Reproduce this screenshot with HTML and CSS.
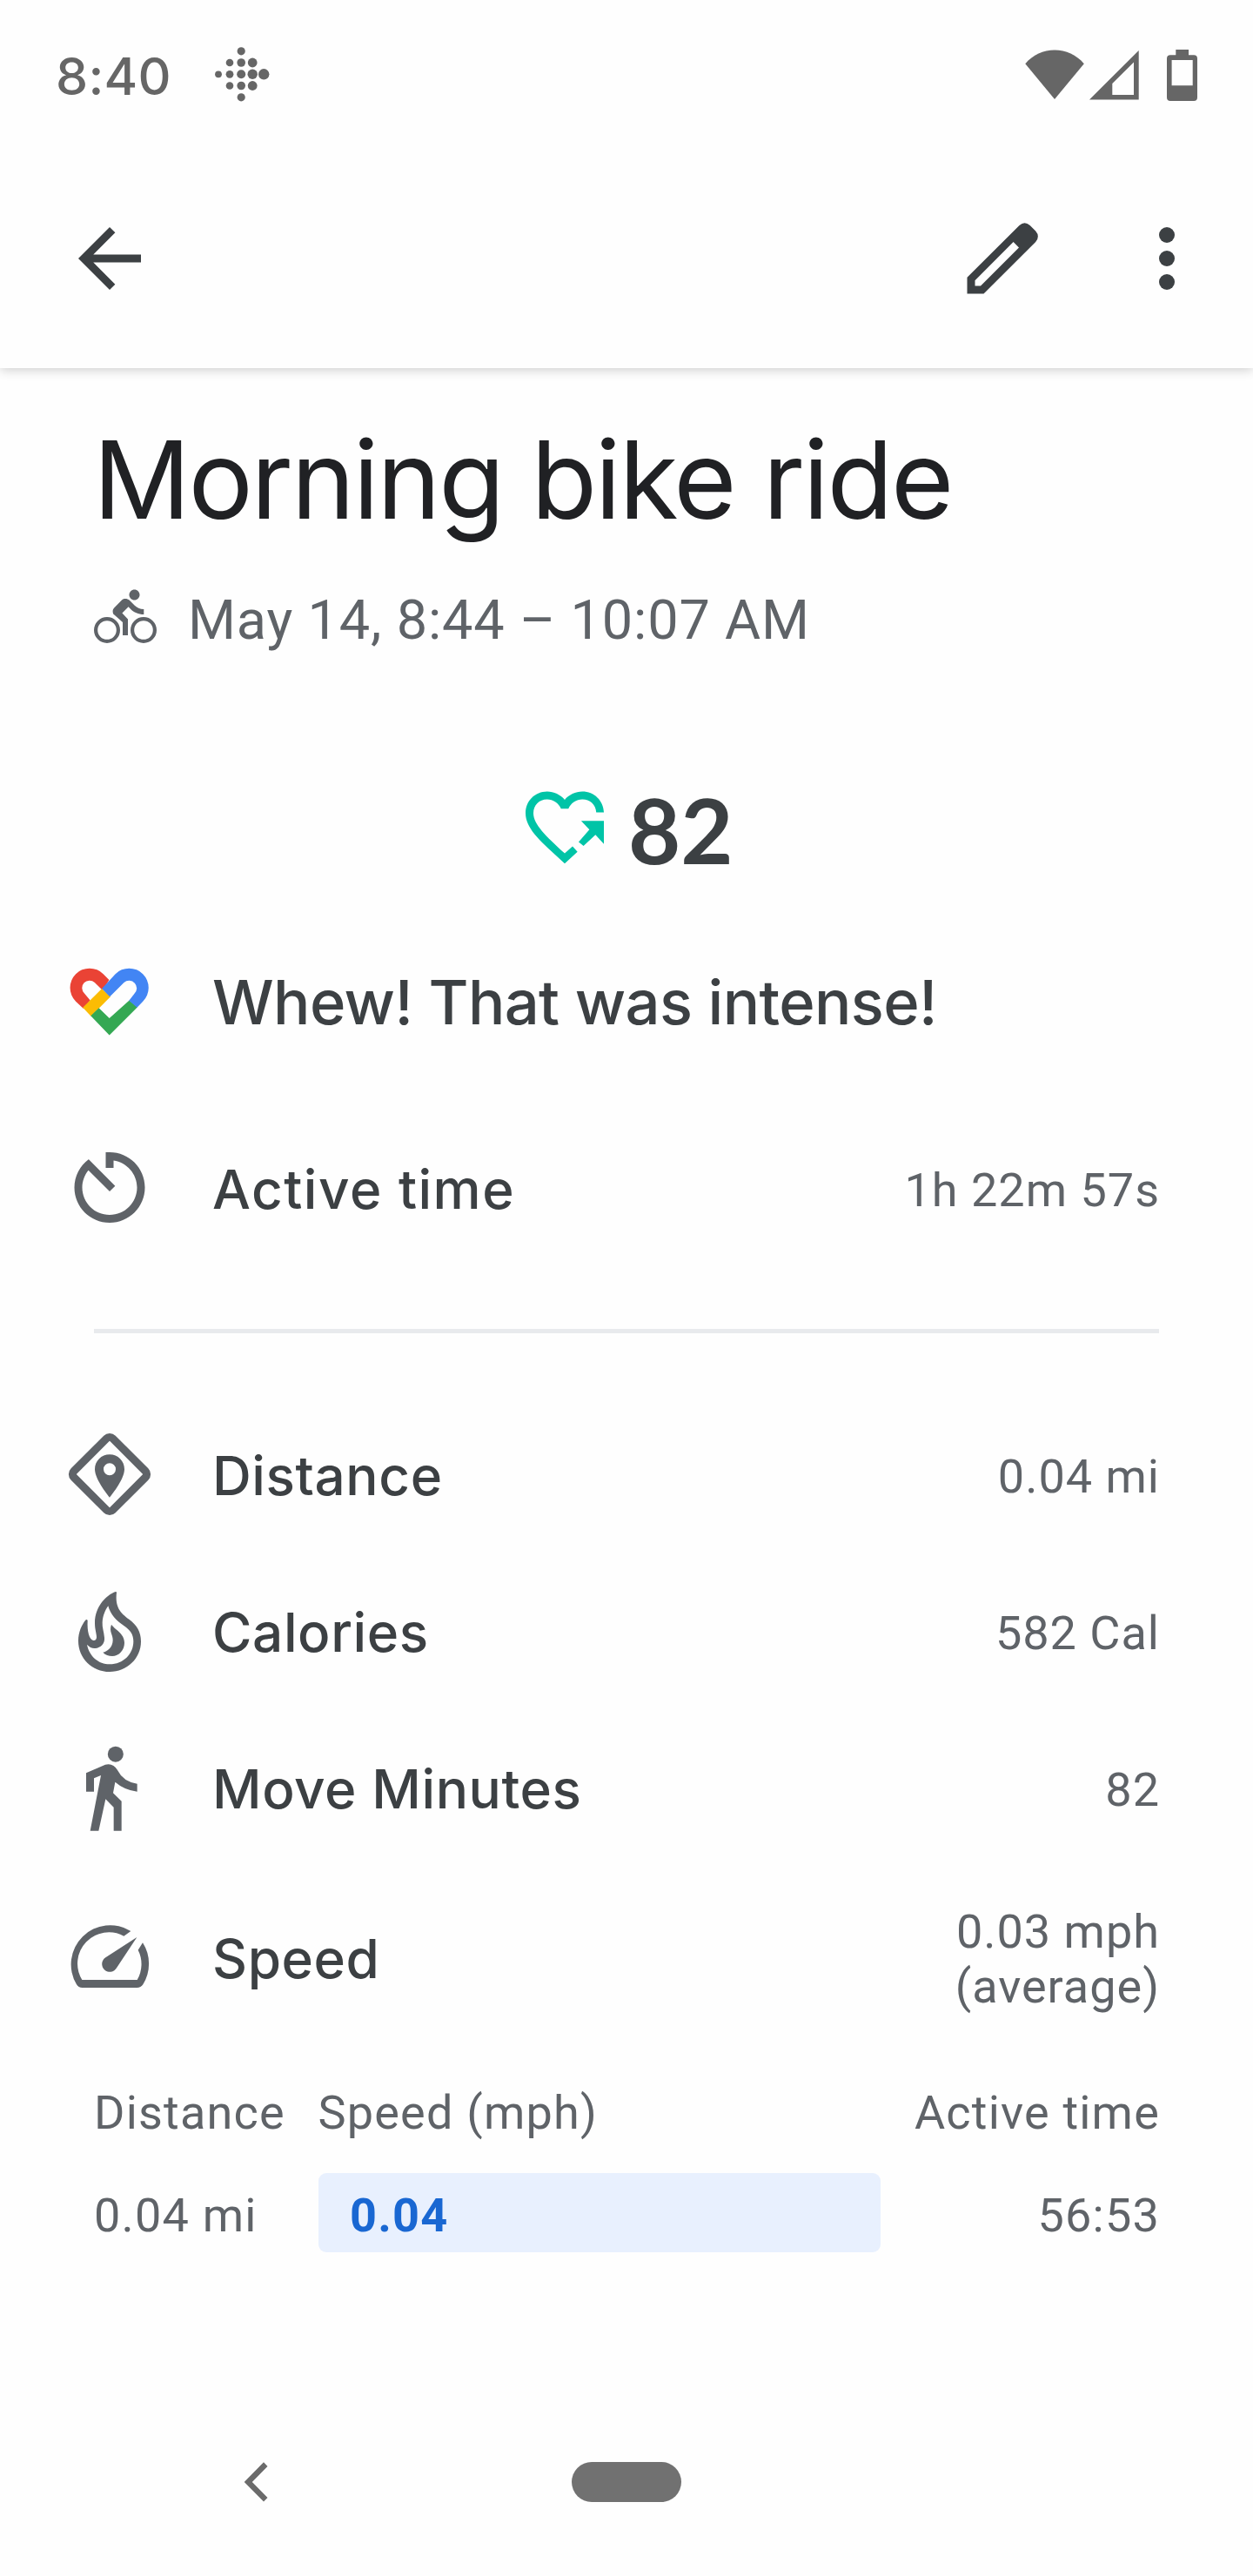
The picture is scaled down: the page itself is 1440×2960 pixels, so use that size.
FILE: index.html
```html
<!DOCTYPE html>
<html lang="en">
<head>
<meta charset="utf-8">
<title>Morning bike ride</title>
<link rel="stylesheet" href="styles.css">
</head>
<body>
<div class="screen">
  <header class="header">
    <div class="status">
      <span class="clock">8:40</span>
      <svg class="dots" viewBox="247 54 64 64">
        <circle cx="251" cy="85.3" r="3.9"/>
        <circle cx="264" cy="72" r="4.3"/><circle cx="264" cy="85.3" r="4.4"/><circle cx="264" cy="98.5" r="4.3"/>
        <circle cx="277.2" cy="58.8" r="4.6"/><circle cx="277.2" cy="72" r="4.8"/><circle cx="277.2" cy="85.3" r="5"/><circle cx="277.2" cy="98.5" r="4.8"/><circle cx="277.2" cy="111.8" r="4.6"/>
        <circle cx="290.2" cy="72" r="5.4"/><circle cx="290.2" cy="85.3" r="5.7"/><circle cx="290.2" cy="98.5" r="5.4"/>
        <circle cx="303.2" cy="85.3" r="6.2"/>
      </svg>
      <svg class="system" viewBox="1176 50 202 70">
        <path d="M1178.3 72.3C1187 62 1199 56.6 1212 56.6S1237 62 1245.8 72.3L1212 113Z"/>
        <path fill-rule="evenodd" d="M1252 113.5L1308.7 57V113.5ZM1278.3 108H1303V70.5L1278.3 95Z"/>
        <path fill-rule="evenodd" d="M1351.3 62.3V56H1366V62.3H1372Q1376 62.3 1376 66.3V111Q1376 115 1372 115H1345Q1341 115 1341 111V66.3Q1341 62.3 1345 62.3ZM1346.6 68V97.2H1370.7V68Z"/>
      </svg>
    </div>
    <nav class="toolbar">
      <svg class="icon back" viewBox="0 0 24 24"><path d="M20 11H7.83l5.59-5.59L12 4l-8 8 8 8 1.41-1.41L7.83 13H20z"/></svg>
      <svg class="icon edit" viewBox="1098 243 108 108"><path fill-rule="evenodd" d="M1111.5 337.5V318.7L1171.5 259Q1177.5 253.6 1183.7 259L1190.2 265.5Q1195.5 271.5 1190.2 278L1130.5 337.5ZM1120.5 328.6H1127L1171 284.5L1164.6 278L1120.5 322.3Z"/></svg>
      <svg class="icon" viewBox="0 0 24 24"><circle cx="12" cy="6" r="2"/><circle cx="12" cy="12" r="2"/><circle cx="12" cy="18" r="2"/></svg>
    </nav>
  </header>

  <main>
    <h1 class="title">Morning bike ride</h1>
    <div class="when">
      <svg class="bike" viewBox="0 0 24 24">
        <path d="M15.5 5.5c1.1 0 2-.9 2-2s-.9-2-2-2-2 .9-2 2 .9 2 2 2zM10.8 10.5l2.4-2.4.8.8c1.3 1.3 3 2.1 5.1 2.1V9c-1.5 0-2.7-.6-3.6-1.5l-1.9-1.9c-.5-.4-1-.6-1.6-.6s-1.1.2-1.4.6L7.8 8.4c-.4.4-.6.9-.6 1.4 0 .6.2 1.1.6 1.4L11 14v5h2v-6.2z"/>
        <g fill="none" stroke="#5f6368" stroke-width="1.4"><circle cx="5" cy="17" r="4.3"/><circle cx="19" cy="17" r="4.3"/></g>
      </svg>
      <span>May 14, 8:44 – 10:07 AM</span>
    </div>

    <div class="score">
      <svg class="heart" viewBox="2 0 20 24"><path d="M22 8.33C21.9 5.3 19.5 3 16.5 3c-1.74 0-3.41.81-4.5 2.09C10.91 3.81 9.24 3 7.5 3 4.42 3 2 5.42 2 8.5c0 3.78 3.4 6.86 8.55 11.54L12 21.4 15.26 18.4 14 17 12 18.8C7.2 14.4 4 11.4 4 8.5 4 6.5 5.5 5 7.5 5c1.5 0 3 1 3.55 2.4h1.9C13.5 6 15 5 16.5 5c1.9 0 3.45 1.3 3.55 3.33zM16.2 10.5H22V16.4L19.85 14.07 16.8 16.9 15.55 15.9 18.3 12.7z"/></svg>
      <span>82</span>
    </div>

    <div class="row">
      <svg class="icon" viewBox="72 1097 108 108">
        <path fill="#ea4335" d="M125.4 1126L118.7 1119.2A22.3 22.3 0 0 0 87.1 1150.8L95.7 1158.7L103.7 1149.5L97 1141.5A8.3 8.3 0 0 1 108.8 1129L118 1138Z"/>
        <path fill="#fbbc04" d="M117.1 1136L127 1145.3L104.6 1167.7L95.2 1157.7Z"/>
        <path fill="#34a853" d="M104.3 1167.3L113.6 1158.3L125.7 1170L148.6 1149.6L158 1157.3L125.7 1189.5Z"/>
        <path fill="#4285f4" d="M117.1 1136L132.6 1119.2A22.3 22.3 0 0 1 164.2 1150.8L157.5 1157.8L148.3 1149.8L154.3 1142A8.3 8.3 0 0 0 142.5 1129.1L126.2 1145.3Z"/>
      </svg>
      <span class="label message">Whew! That was intense!</span>
    </div>

    <div class="row active">
      <svg class="icon" viewBox="0 .33 24 24"><path d="M11 3v4h2V5.08c3.39.49 6 3.39 6 6.92 0 3.87-3.13 7-7 7s-7-3.13-7-7c0-1.68.59-3.22 1.58-4.42L12 13l1.41-1.41-6.8-6.8v.02C4.42 6.45 3 9.05 3 12c0 4.97 4.02 9 9 9 4.97 0 9-4.03 9-9s-4.03-9-9-9h-1z"/></svg>
      <span class="label wide">Active time</span>
      <span class="value">1h 22m 57s</span>
    </div>

    <hr class="divider">

    <div class="row">
      <svg class="icon" viewBox="72 1641 108 108">
        <rect x="94.4" y="1662.4" width="63.2" height="63.2" rx="5" fill="none" stroke="#5f6368" stroke-width="9" transform="rotate(45 126 1694)"/>
        <path fill-rule="evenodd" d="M126 1671.3C116.5 1671.3 109 1678.8 109 1688.3C109 1700.5 126 1720.7 126 1720.7S143 1700.5 143 1688.3C143 1678.8 135.5 1671.3 126 1671.3ZM126 1681.3A7 7 0 1 1 126 1695.3A7 7 0 1 1 126 1681.3Z"/>
      </svg>
      <span class="label">Distance</span>
      <span class="value">0.04 mi</span>
    </div>
    <div class="row">
      <svg class="icon" viewBox="36 603 324 324">
        <path fill-rule="evenodd" d="M222 629Q221 626 216 628C190 638 147 675 147 735C147 758 153 770 153 784C153 792 148 796 142 795C128 792 120 765 122 726Q119 720 114 726C102 742 90 765 90 797C90 855 137 903 198 903C258 903 306 857 306 798C306 765 292 742 265 722C235 700 216 680 222 629ZM193 676C200 705 222 728 247 744C270 760 280 775 280 798C280 842 245 877 198 877C160 877 128 850 120 809C128 818 138 823 148 822C168 820 182 805 180 785C178 765 172 750 173 733C174 710 183 690 193 676Z"/>
        <path d="M204 740C215 757 249 770 249 803C249 828 230 849 207 849C195 849 183 845 175 836C190 833 208 820 209 795C210 775 195 765 204 740Z"/>
      </svg>
      <span class="label">Calories</span>
      <span class="value">582 Cal</span>
    </div>
    <div class="row">
      <svg class="icon" viewBox="36 63 324 324">
        <circle cx="218.5" cy="107" r="27"/>
        <path d="M117 172L183 143Q210 136 225 162Q245 202 293 209V236Q248 230 217 203L210 241L239 269V371H212V290L184 262L160 371H131L168 180L144 190V236H117Z"/>
      </svg>
      <span class="label">Move Minutes</span>
      <span class="value">82</span>
    </div>
    <div class="row tall">
      <svg class="icon" viewBox="36 648 324 324">
        <path d="M271 717A135 135 0 0 0 84 901Q90 912 104 912H292Q306 912 313 901A135 135 0 0 0 312 757L296 782A108 108 0 0 1 293 885H103A108 108 0 0 1 247 734Z"/>
        <path d="M292 738L183 808.5A27 27 0 1 0 222 844Z"/>
      </svg>
      <span class="label">Speed</span>
      <span class="value">0.03 mph<br>(average)</span>
    </div>

    <section class="splits">
      <div class="splits-row splits-head">
        <span>Distance</span><span>Speed (mph)</span><span class="end">Active time</span>
      </div>
      <div class="splits-row splits-data">
        <span>0.04 mi</span><span class="bar">0.04</span><span class="end">56:53</span>
      </div>
    </section>
  </main>

  <footer class="navbar">
    <svg class="chevron" viewBox="280 2829 28 46"><path d="M280.7 2852L303 2829.3L307.5 2834L289.8 2852L307.5 2870L303 2874.5Z"/></svg>
    <span class="pill"></span>
  </footer>
</div>
</body>
</html>
```
FILE: styles.css
```css
* { box-sizing: border-box; }

body {
  margin: 0;
  background: #fff;
  color: #5f6368;
  font-family: Roboto, sans-serif;
}

svg { display: block; flex: none; }

.screen {
  display: flex;
  flex-direction: column;
  width: 1440px;
  height: 2960px;
  background: #fefefe;
}

.header {
  height: 423px;
  background: #fefefe;
  box-shadow: 0 2px 12px rgba(0, 0, 0, .2);
}

.status {
  display: flex;
  align-items: center;
  height: 171px;
  padding: 0 62px 0 64px;
  color: #666;
}

.status svg { fill: #666; }

.clock {
  width: 183px;
  padding-top: 5px;
  font: 500 59px/72px Inter, sans-serif;
  letter-spacing: .25px;
}

.dots { width: 64px; height: 64px; }
.system { width: 202px; height: 70px; margin-left: auto; }

.toolbar {
  display: flex;
  align-items: center;
  height: 252px;
  padding: 0 45px 0 72px;
}

.icon { width: 108px; height: 108px; fill: #5f6368; }
.toolbar .icon { fill: #3c4043; }
.edit { margin-left: auto; margin-right: 81px; }

main { flex: 1; }

.title {
  margin: 60px 0 0 107px;
  color: #202124;
  font: 400 124px/136px Inter, sans-serif;
  letter-spacing: -2.4px;
  white-space: nowrap;
}

.when {
  display: flex;
  gap: 36px;
  height: 76px;
  margin: 54px 0 0 108px;
  font-size: 63px;
  line-height: 80px;
  letter-spacing: .83px;
}

.bike { width: 72px; height: 72px; fill: #5f6368; }

.score {
  display: flex;
  align-items: center;
  gap: 28px;
  height: 108px;
  margin-top: 147px;
  padding-left: 604px;
  color: #3c4043;
  font: 700 104px/108px Lato, sans-serif;
}

.score span { padding-top: 6px; }
.heart { width: 90px; height: 108px; fill: #00c4a7; }

.row {
  display: flex;
  align-items: center;
  height: 180px;
  padding: 0 107px 0 72px;
}

.score + .row { margin-top: 57px; }
.row.active { margin-top: 35px; }
.row.tall { height: 210px; }

.label {
  margin-left: 64px;
  padding-top: 2px;
  color: #3c4043;
  font: 500 62px/72px Inter, sans-serif;
  letter-spacing: .6px;
}

.label.wide { letter-spacing: 1.5px; }
.label.message { font-size: 70.5px; letter-spacing: -.6px; }

.value {
  margin-left: auto;
  padding-top: 2px;
  font-size: 54px;
  line-height: 63px;
  letter-spacing: 1px;
  text-align: right;
}

.divider {
  height: 5px;
  margin: 71px 108px 73px;
  border: 0;
  background: #e8eaed;
}

.splits {
  margin: 40px 107px 0 108px;
  font-size: 54px;
  letter-spacing: 1.2px;
}

.splits-row {
  display: grid;
  grid-template-columns: 257.5px 646px 1fr;
  line-height: 65px;
}

.splits-head { white-space: nowrap; }
.splits-head .end { justify-self: end; }

.splits-data {
  height: 91px;
  margin-top: 37px;
  line-height: 97px;
}

.bar {
  height: 91px;
  padding-left: 36.5px;
  border-radius: 9px;
  background: #e8f0fe;
  color: #1967d2;
  font-weight: 700;
}

.end { text-align: right; }

.navbar {
  display: flex;
  align-items: center;
  gap: 349px;
  height: 216px;
  padding-left: 280px;
}

.chevron { width: 28px; height: 46px; fill: #6b6b6b; }
.pill { width: 126px; height: 46px; border-radius: 23px; background: #717171; }
```
